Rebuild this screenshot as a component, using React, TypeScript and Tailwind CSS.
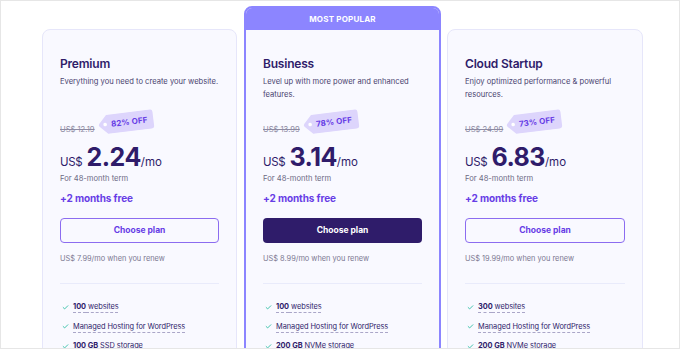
import { Check } from "lucide-react"

type Plan = {
  name: string
  desc: string
  oldPrice: string
  off: string
  price: string
  renew: string
  sites: string
  storage: string
  storageType: string
  popular?: boolean
}

const plans: Plan[] = [
  {
    name: "Premium",
    desc: "Everything you need to create your website.",
    oldPrice: "US$ 12.19",
    off: "82% OFF",
    price: "2.24",
    renew: "US$ 7.99/mo when you renew",
    sites: "100",
    storage: "100 GB",
    storageType: "SSD storage",
  },
  {
    name: "Business",
    desc: "Level up with more power and enhanced features.",
    oldPrice: "US$ 13.99",
    off: "78% OFF",
    price: "3.14",
    renew: "US$ 8.99/mo when you renew",
    sites: "100",
    storage: "200 GB",
    storageType: "NVMe storage",
    popular: true,
  },
  {
    name: "Cloud Startup",
    desc: "Enjoy optimized performance & powerful resources.",
    oldPrice: "US$ 24.99",
    off: "73% OFF",
    price: "6.83",
    renew: "US$ 19.99/mo when you renew",
    sites: "300",
    storage: "200 GB",
    storageType: "NVMe storage",
  },
]

function Tag({ label }: { label: string }) {
  return (
    <div className="relative ml-[3px] mb-[4px] h-[20px] w-[56px] -rotate-[7deg]">
      <svg width="56" height="20" viewBox="0 0 56 20" className="absolute inset-0">
        <path
          d="M9 0.5 L53 0.5 Q55.5 0.5 55.5 3 L55.5 17 Q55.5 19.5 53 19.5 L9 19.5 L1.2 11.4 Q0 10 1.2 8.6 Z"
          fill="#ddd5fc"
        />
        <circle cx="7" cy="10" r="1.8" fill="#ffffff" />
      </svg>
      <span className="relative flex h-full items-center pl-[13px] text-[8px] font-bold tracking-[0.1px] text-[#673de6]">
        {label}
      </span>
    </div>
  )
}

function Feature({ children, plain }: { children: React.ReactNode; plain?: boolean }) {
  return (
    <li className="flex items-center">
      <Check size={7} strokeWidth={2.5} color="#00b090" className="ml-[2px] mr-[4px]" />
      <span
        className={
          plain ? "" : "underline decoration-dashed decoration-[#aaa6c8] underline-offset-[3px]"
        }
      >
        {children}
      </span>
    </li>
  )
}

function CardBody({ plan }: { plan: Plan }) {
  return (
    <div className="px-[17px] pt-[25px] pb-10">
      <h3 className="text-[12px] leading-[18px] font-semibold tracking-[-0.2px] text-[#2f1c6a]">
        {plan.name}
      </h3>
      <p className="mt-[2px] h-[26px] text-[7.6px] leading-[13px] text-[#4a4470]">{plan.desc}</p>

      <div className="mt-[9px] flex h-[26px] items-end">
        <span className="text-[7.6px] leading-[12px] text-[#8e8ba3] line-through">{plan.oldPrice}</span>
        <Tag label={plan.off} />
      </div>

      <div className="mt-[6px] flex h-[30px] items-baseline text-[#2f1c6a]">
        <span className="mr-[4px] text-[11.5px] tracking-[-0.3px]">US$</span>
        <span className="text-[25px] leading-[30px] font-bold tracking-[-0.5px]">{plan.price}</span>
        <span className="text-[11.5px]">/mo</span>
      </div>

      <p className="mt-[1px] text-[7.6px] leading-[12px] text-[#6d6a84]">For 48-month term</p>
      <p className="mt-[5px] text-[10px] leading-[16px] font-bold tracking-[-0.1px] text-[#673de6]">
        +2 months free
      </p>

      {plan.popular ? (
        <button className="mt-[12px] flex h-[25px] w-full items-center justify-center rounded-[4px] bg-[#2f1c6a] text-[8.5px] font-bold text-white">
          Choose plan
        </button>
      ) : (
        <button className="mt-[12px] flex h-[25px] w-full items-center justify-center rounded-[4px] border-[1.5px] border-[#8c6cf0] text-[8.5px] font-bold text-[#673de6]">
          Choose plan
        </button>
      )}

      <p className="mt-[10px] text-[7.4px] leading-[12px] text-[#7b7891]">{plan.renew}</p>

      <div className="mt-[18px] h-px bg-[#e9ebfb]" />

      <ul className="mt-[16px] flex flex-col gap-[5.5px] text-[7.4px] leading-[14px] tracking-[-0.05px] text-[#2f1c6a]">
        <Feature>
          <b className="font-bold">{plan.sites}</b> websites
        </Feature>
        <Feature>Managed Hosting for WordPress</Feature>
        <Feature>
          <b className="font-bold">{plan.storage}</b> {plan.storageType}
        </Feature>
        <Feature plain>Free domain</Feature>
      </ul>
    </div>
  )
}

export default function App() {
  return (
    <div
      className="relative h-[349px] w-[680px] overflow-hidden border border-[#e6e6e6] bg-white"
      style={{ fontFamily: "Inter, 'Noto Sans', sans-serif" }}
    >
      <div className="flex items-start pl-[41px] pt-[5px]">
        <div className="mt-[23px] w-[195px] shrink-0 rounded-lg border border-[#e6e6fa] bg-[#f9f9ff]">
          <CardBody plan={plans[0]} />
        </div>
        <div className="ml-[7px] w-[197px] shrink-0 overflow-hidden rounded-lg border-2 border-[#8c85ff] bg-[#f9f9ff]">
          <div className="flex h-[22px] items-center justify-center bg-[#8c85ff] text-[8px] font-bold tracking-[0.2px] text-white">
            MOST POPULAR
          </div>
          <CardBody plan={plans[1]} />
        </div>
        <div className="ml-[6px] mt-[23px] w-[196px] shrink-0 rounded-lg border border-[#e6e6fa] bg-[#f9f9ff]">
          <CardBody plan={plans[2]} />
        </div>
      </div>
    </div>
  )
}
